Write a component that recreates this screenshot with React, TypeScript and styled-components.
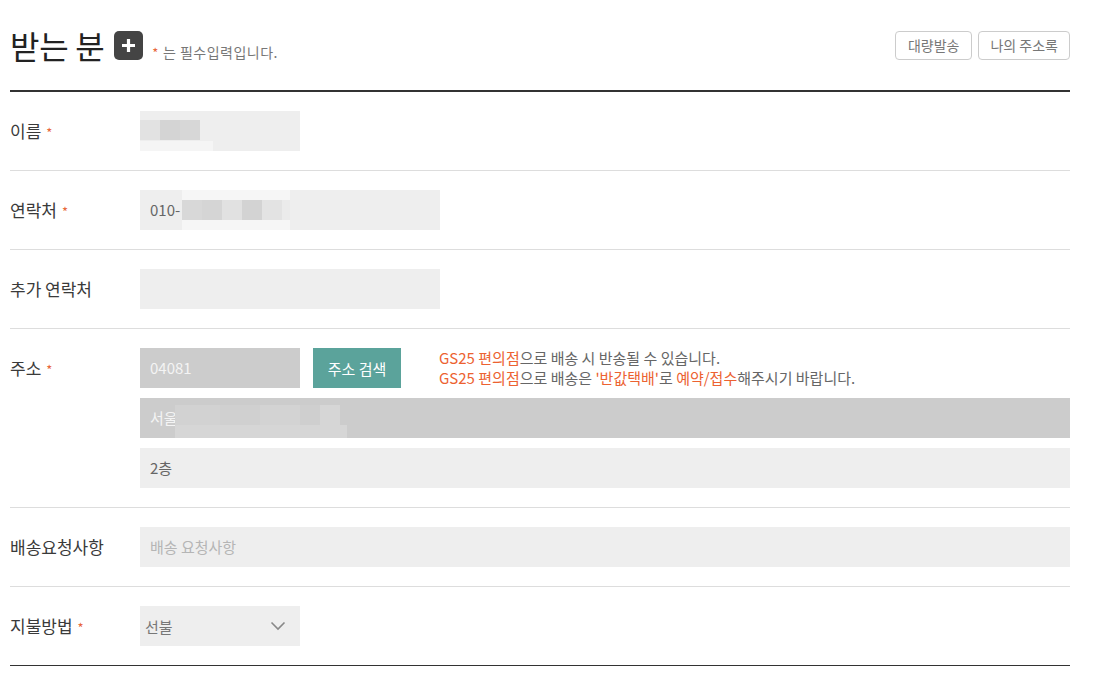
import React from "react";
import styled, { createGlobalStyle } from "styled-components";

const GlobalStyle = createGlobalStyle`
  body {
    margin: 0;
    background: #fff;
    font-family: "Noto Sans CJK KR", "Noto Sans", sans-serif;
    color: #333;
  }
`;

const Wrap = styled.div`
  width: 1060px;
  margin-left: 10px;
`;

const Header = styled.header`
  height: 90px;
  display: flex;
  align-items: center;
  justify-content: space-between;
  border-bottom: 2px solid #333;
`;

const TitleGroup = styled.div`
  display: flex;
  align-items: center;
`;

const Title = styled.h2`
  margin: 0;
  font-size: 32px;
  font-weight: 400;
  line-height: 1;
  color: #222;
  letter-spacing: -0.3px;
`;

const PlusButton = styled.button`
  width: 29px;
  height: 29px;
  margin-left: 10px;
  border: 0;
  border-radius: 5px;
  background: #444;
  padding: 0;
  display: flex;
  align-items: center;
  justify-content: center;
`;

const Note = styled.span`
  margin-left: 9px;
  padding-top: 14px;
  font-size: 14px;
  letter-spacing: 0.5px;
  color: #777;
`;

const Star = styled.span`
  color: #e8673a;
  font-size: 13px;
  margin: 0 4px 0 0;
`;

const HeadButtons = styled.div`
  display: flex;
  gap: 6px;
`;

const SmallButton = styled.button<{ $pad?: number }>`
  height: 29px;
  padding: 0 ${(p) => p.$pad ?? 12}px;
  border: 1px solid #ccc;
  border-radius: 4px;
  background: #fff;
  font-family: inherit;
  font-size: 14px;
  color: #777;
`;

const Row = styled.div<{ $last?: boolean }>`
  display: flex;
  padding: 19px 0;
  border-bottom: 1px solid ${(p) => (p.$last ? "#333" : "#ddd")};
`;

const Label = styled.div`
  width: 130px;
  flex-shrink: 0;
  height: 40px;
  line-height: 40px;
  font-size: 17px;
  color: #3a3a3a;
`;

const Fields = styled.div`
  flex: 1;
  display: flex;
  flex-direction: column;
  gap: 10px;
`;

const Line = styled.div`
  display: flex;
  align-items: flex-start;
`;

const Field = styled.div<{ $w?: number; $dark?: boolean; $placeholder?: boolean }>`
  position: relative;
  width: ${(p) => (p.$w ? `${p.$w}px` : "100%")};
  height: 40px;
  box-sizing: border-box;
  padding-left: 10px;
  line-height: 40px;
  font-size: 15px;
  background: ${(p) => (p.$dark ? "#cccccc" : "#eeeeee")};
  color: ${(p) => (p.$dark ? "#f4f4f4" : p.$placeholder ? "#b5b5b5" : "#666")};
  overflow: hidden;
`;

const Tile = styled.span<{ $x: number; $y: number; $w: number; $h: number; $c: string }>`
  position: absolute;
  left: ${(p) => p.$x}px;
  top: ${(p) => p.$y}px;
  width: ${(p) => p.$w}px;
  height: ${(p) => p.$h}px;
  background: ${(p) => p.$c};
`;

const SearchButton = styled.button`
  width: 88px;
  height: 40px;
  margin-left: 13px;
  border: 0;
  padding: 0;
  background: #5ba39b;
  color: #fff;
  font-family: inherit;
  font-size: 15px;
`;

const Notice = styled.div`
  margin-left: 38px;
  font-size: 15px;
  line-height: 20px;
  color: #666;
`;

const Em = styled.span`
  color: #ec6231;
`;

const Select = styled.div`
  width: 160px;
  height: 40px;
  box-sizing: border-box;
  padding: 0 14px 0 5px;
  background: #eeeeee;
  display: flex;
  align-items: center;
  justify-content: space-between;
  font-size: 15px;
  color: #777;
`;

type T = [number, number, number, number, string];

const nameTiles: T[] = [
  [0, 9, 20, 20, "#e2e2e2"],
  [20, 9, 20, 20, "#d4d4d4"],
  [40, 9, 20, 20, "#d7d7d7"],
  [0, 30, 73, 10, "#f5f5f5"],
];

const phoneTiles: T[] = [
  [42, 0, 108, 10, "#f6f6f6"],
  [42, 10, 20, 20, "#d8d8d8"],
  [62, 10, 20, 20, "#d5d5d5"],
  [82, 10, 20, 20, "#e1e1e1"],
  [102, 10, 20, 20, "#d3d3d3"],
  [122, 10, 20, 20, "#e3e3e3"],
  [142, 10, 8, 20, "#ebebeb"],
  [42, 30, 108, 10, "#f6f6f6"],
];

const addrTiles: T[] = [
  [35, 7, 45, 20, "#d2d2d2"],
  [80, 7, 40, 20, "#d0d0d0"],
  [120, 7, 40, 20, "#d3d3d3"],
  [160, 7, 20, 20, "#cfcfcf"],
  [180, 7, 20, 20, "#d6d6d6"],
  [35, 27, 172, 13, "#d6d6d6"],
];

const Mosaic = ({ tiles }: { tiles: T[] }) => (
  <>
    {tiles.map(([x, y, w, h, c], i) => (
      <Tile key={i} $x={x} $y={y} $w={w} $h={h} $c={c} />
    ))}
  </>
);

const ReqStar = styled(Star)`
  margin: 0 0 0 5px;
`;

const Req = () => <ReqStar>*</ReqStar>;

export default function App() {
  return (
    <Wrap>
      <GlobalStyle />
      <Header>
        <TitleGroup>
          <Title>받는 분</Title>
          <PlusButton aria-label="추가">
            <svg width="17" height="17" viewBox="0 0 17 17">
              <path d="M8.5 2v13M2 8.5h13" stroke="#fff" strokeWidth="3.2" />
            </svg>
          </PlusButton>
          <Note>
            <Star>*</Star>는 필수입력입니다.
          </Note>
        </TitleGroup>
        <HeadButtons>
          <SmallButton>대량발송</SmallButton>
          <SmallButton $pad={11}>나의 주소록</SmallButton>
        </HeadButtons>
      </Header>

      <Row>
        <Label>
          이름<Req />
        </Label>
        <Fields>
          <Field $w={160}>
            <Mosaic tiles={nameTiles} />
          </Field>
        </Fields>
      </Row>

      <Row>
        <Label>
          연락처<Req />
        </Label>
        <Fields>
          <Field $w={300}>
            010-
            <Mosaic tiles={phoneTiles} />
          </Field>
        </Fields>
      </Row>

      <Row>
        <Label>추가 연락처</Label>
        <Fields>
          <Field $w={300} />
        </Fields>
      </Row>

      <Row>
        <Label>
          주소<Req />
        </Label>
        <Fields>
          <Line>
            <Field $w={160} $dark>
              04081
            </Field>
            <SearchButton>주소 검색</SearchButton>
            <Notice>
              <div>
                <Em>GS25 편의점</Em>으로 배송 시 반송될 수 있습니다.
              </div>
              <div>
                <Em>GS25 편의점</Em>으로 배송은 <Em>'반값택배'</Em>로 <Em>예약/접수</Em>
                해주시기 바랍니다.
              </div>
            </Notice>
          </Line>
          <Field $dark>
            서울
            <Mosaic tiles={addrTiles} />
          </Field>
          <Field>2층</Field>
        </Fields>
      </Row>

      <Row>
        <Label>배송요청사항</Label>
        <Fields>
          <Field $placeholder>배송 요청사항</Field>
        </Fields>
      </Row>

      <Row $last>
        <Label>
          지불방법<Req />
        </Label>
        <Fields>
          <Select>
            선불
            <svg width="16" height="10" viewBox="0 0 16 10">
              <path d="M1.5 1.5l6.5 6.5 6.5-6.5" fill="none" stroke="#888" strokeWidth="1.6" />
            </svg>
          </Select>
        </Fields>
      </Row>
    </Wrap>
  );
}
